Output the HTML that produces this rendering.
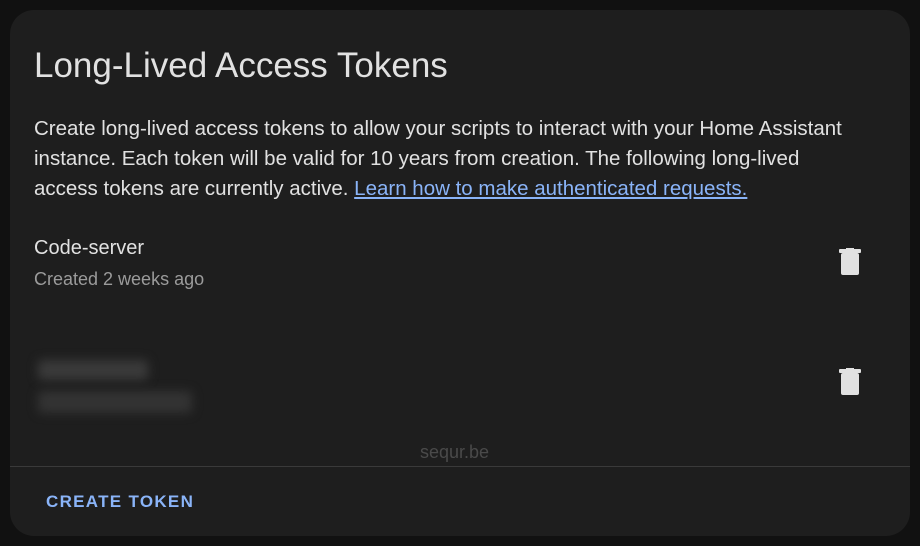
<!DOCTYPE html>
<html><head><style>
body{margin:0;width:920px;height:546px;background:#111;font-family:"Liberation Sans",sans-serif;overflow:hidden;position:relative}
.card{position:absolute;left:10px;top:10px;width:900px;height:526px;background:#1e1e1e;border-radius:24px}
.t{position:absolute;white-space:nowrap}
h1{position:absolute;left:24px;top:36px;margin:0;font-weight:400;font-size:35px;color:#e1e1e1}
.p{position:absolute;left:24px;top:104px;width:820px;font-size:20.5px;line-height:30px;color:#e1e1e1}
a{color:#8ab4f8;text-decoration:underline}
.trash{position:absolute}
.blur{position:absolute;background:#3a3a3a;filter:blur(5px);border-radius:4px}
</style></head><body>
<div class="card">
<h1>Long-Lived Access Tokens</h1>
<div class="p">Create long-lived access tokens to allow your scripts to interact with your Home Assistant instance. Each token will be valid for 10 years from creation. The following long-lived access tokens are currently active. <a>Learn how to make authenticated requests.</a></div>
<div class="t" style="left:24px;top:227px;font-size:20px;color:#e1e1e1">Code-server</div>
<div class="t" style="left:24px;top:259px;font-size:18px;color:#9b9b9b">Created 2 weeks ago</div>
<svg class="trash" style="left:828px;top:238px" width="24" height="28" viewBox="0 0 24 28"><rect x="1" y="1" width="22" height="4" rx="1" fill="#e1e1e1"/><rect x="8" y="-1" width="8" height="3" rx="1" fill="#e1e1e1"/><rect x="3" y="5" width="18" height="22" rx="2" fill="#e1e1e1"/></svg>
<div class="blur" style="left:28px;top:350px;width:110px;height:20px"></div>
<div class="blur" style="left:28px;top:381px;width:154px;height:22px;background:#333"></div>
<svg class="trash" style="left:828px;top:358px" width="24" height="28" viewBox="0 0 24 28"><rect x="1" y="1" width="22" height="4" rx="1" fill="#e1e1e1"/><rect x="8" y="-1" width="8" height="3" rx="1" fill="#e1e1e1"/><rect x="3" y="5" width="18" height="22" rx="2" fill="#e1e1e1"/></svg>
<div class="t" style="left:410px;top:432px;font-size:18px;color:#4a4a4a">sequr.be</div>
<div style="position:absolute;left:0;right:0;top:456px;height:1px;background:#3a3a3a"></div>
<div class="t" style="left:36px;top:482px;font-size:17px;font-weight:700;letter-spacing:1.3px;color:#8ab4f8">CREATE TOKEN</div>
</div>
</body></html>
